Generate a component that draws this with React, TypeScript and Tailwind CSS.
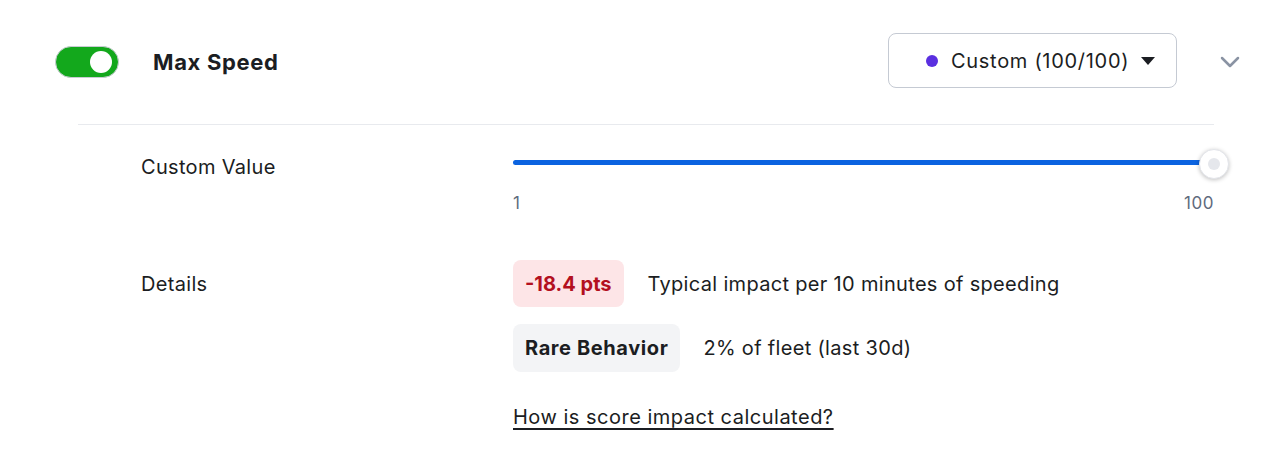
import React from "react";

function Toggle() {
  return (
    <div className="relative w-16 h-8 rounded-full bg-[#13a81c] border border-[#c9ccd3] shrink-0">
      <div className="absolute right-[6px] top-[4px] w-[22px] h-[22px] rounded-full bg-white" />
    </div>
  );
}

function Slider() {
  return (
    <div>
      <div className="relative h-[30px] flex items-center">
        <div className="w-full h-[5px] -mt-[3px] rounded-full bg-[#0b63e0]" />
        <div className="absolute right-[-15px] top-0 w-[30px] h-[30px] rounded-full bg-white border border-[#e3e5ea] shadow-[0_1px_4px_rgba(0,0,0,0.25)] flex items-center justify-center">
          <div className="w-[12px] h-[12px] rounded-full bg-[#e5e7ec]" />
        </div>
      </div>
      <div className="flex justify-between mt-[12px] text-[17px] leading-6 text-[#5f6b7d] tracking-[0.03em]">
        <span>1</span>
        <span>100</span>
      </div>
    </div>
  );
}

export default function App() {
  return (
    <div className="w-full min-h-[476px] bg-white text-[#1b1d22] tracking-[0.02em] font-['Inter','Liberation_Sans',sans-serif]">
      {/* Header row */}
      <div className="flex items-center h-[124px] pl-[55px] pr-[40px]">
        <Toggle />
        <span className="ml-[34px] text-[22px] font-bold tracking-[0.03em]">Max Speed</span>
        <button className="ml-auto -mt-[3px] flex items-center h-[55px] w-[289px] pl-[37px] rounded-lg border border-[#c5cad3] bg-white">
          <span className="w-3 h-3 rounded-full bg-[#5a2fe0]" />
          <span className="ml-[13px] text-[20px] tracking-[0.035em]">Custom (100/100)</span>
          <svg className="ml-[12px]" width="14" height="8" viewBox="0 0 14 8">
            <path d="M0 0h14L7 8z" fill="#1b1d22" />
          </svg>
        </button>
        <svg className="ml-[43px]" width="20" height="12" viewBox="0 0 20 12">
          <path d="M2 2l8 8 8-8" fill="none" stroke="#8a93a3" strokeWidth="2.5" strokeLinecap="round" strokeLinejoin="round" />
        </svg>
      </div>

      <div className="ml-[78px] mr-[66px] h-px bg-[#e8eaee]" />

      <div className="pl-[141px] pr-[66px]">
        {/* Custom value */}
        <div className="flex mt-[26px]">
          <div className="w-[372px] text-[20px] leading-[30px] shrink-0 mt-[1px]">Custom Value</div>
          <div className="flex-1 -mt-[2px]">
            <Slider />
          </div>
        </div>

        {/* Details */}
        <div className="flex mt-[45px]">
          <div className="w-[372px] text-[20px] leading-[47px] shrink-0 mt-[1px]">Details</div>
          <div className="flex-1 flex flex-col items-start">
            <div className="flex items-center">
              <span className="h-[47px] px-3 flex items-center rounded-lg bg-[#fde5e7] text-[#b3101f] text-[20px] font-bold tracking-normal">-18.4 pts</span>
              <span className="ml-6 text-[20px]">Typical impact per 10 minutes of speeding</span>
            </div>
            <div className="flex items-center mt-[17px]">
              <span className="h-[48px] px-3 flex items-center rounded-lg bg-[#f3f4f6] text-[20px] font-bold tracking-[0.03em]">Rare Behavior</span>
              <span className="ml-[23px] text-[20px]">2% of fleet (last 30d)</span>
            </div>
            <a href="#" className="mt-[31px] text-[20px] leading-7 underline underline-offset-4 tracking-[0.025em]">How is score impact calculated?</a>
          </div>
        </div>
      </div>
    </div>
  );
}
